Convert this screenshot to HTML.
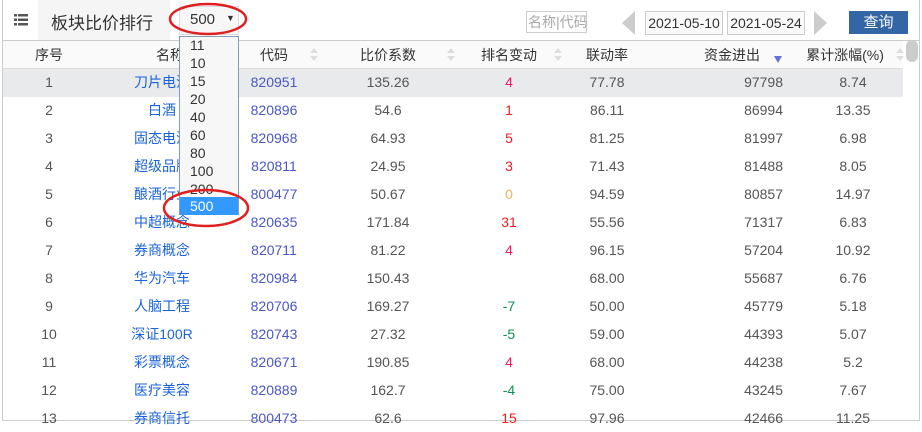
<!DOCTYPE html>
<html><head><meta charset="utf-8"><style>
body{margin:0;width:922px;height:424px;overflow:hidden;background:#fff;font-family:"Liberation Sans","Noto Sans CJK SC",sans-serif;position:relative}
.a{position:absolute;white-space:nowrap}
.cell{position:absolute;font-size:14px;color:#555;text-align:center;line-height:28px}
.bl{color:#1a63d8}
.sort{position:absolute;width:0;height:0;border-left:4px solid transparent;border-right:4px solid transparent}
</style></head><body>
<div class="a" style="left:2px;top:8px;width:916px;height:412px;border:1px solid #ccc;border-top:none"></div>
<div class="a" style="left:2px;top:0;width:916px;height:40px;border-bottom:1px solid #ccc;border-left:1px solid #ccc;border-right:1px solid #ccc"></div>
<div class="a" style="left:38px;top:0;width:132px;height:40px;background:#f5f5f5"></div>
<svg class="a" style="left:14px;top:14px" width="14" height="12"><g fill="#555"><rect x="0" y="0" width="3" height="2.5"/><rect x="4" y="0" width="10" height="2.5"/><rect x="0" y="4.5" width="3" height="2.5"/><rect x="4" y="4.5" width="10" height="2.5"/><rect x="0" y="9" width="3" height="2.5"/><rect x="4" y="9" width="10" height="2.5"/></g></svg>
<div class="a" style="left:51px;top:9px;font-size:17px;color:#333">板块比价排行</div>
<div class="a" style="left:179px;top:6px;width:60px;height:29px;background:#f7f7f7;border:1px solid #ddd;box-sizing:border-box"></div>
<div class="a" style="left:190px;top:11px;font-size:15px;color:#333">500</div>
<div class="a" style="left:226px;top:13px;font-size:9px;color:#333">▼</div>
<div class="a" style="left:526px;top:11px;width:61px;height:22px;border:1px solid #ccc;box-sizing:border-box;font-size:14px;color:#aaa;line-height:20px;padding-left:1px">名称|代码</div>
<svg class="a" style="left:622px;top:11px" width="14" height="24"><polygon points="13,0 13,24 0,12" fill="#ccc"/></svg>
<div class="a" style="left:645px;top:11px;width:78px;height:24px;border:1px solid #ccc;box-sizing:border-box;font-size:14px;color:#333;line-height:22px;text-align:center;background:#fafafa">2021-05-10</div>
<div class="a" style="left:727px;top:11px;width:78px;height:24px;border:1px solid #ccc;box-sizing:border-box;font-size:14px;color:#333;line-height:22px;text-align:center;background:#fafafa">2021-05-24</div>
<svg class="a" style="left:814px;top:11px" width="14" height="24"><polygon points="0,0 0,24 13,12" fill="#ccc"/></svg>
<div class="a" style="left:849px;top:11px;width:59px;height:23px;background:#3465a4;color:#fff;font-size:15px;line-height:23px;text-align:center">查询</div>

<div class="a" style="left:3px;top:41px;width:900px;height:27px;background:#fafafa;border-bottom:1px solid #ddd"></div>
<div class="a" style="left:3px;top:69px;width:900px;height:28px;background:#e9eaec"></div>
<div class="a" style="left:906px;top:40px;width:12px;height:22px;border-radius:6px;background:#ccc"></div>
<div id="hdr"></div>
<div id="rows"></div>

<div class="a" style="left:179px;top:36px;width:60px;height:179px;border:1px solid #7f9db9;box-sizing:border-box;background:#f7f7f7"></div>
<div id="dd"></div>
<svg class="a" style="left:0;top:0" width="922" height="424"><ellipse cx="208" cy="19" rx="38" ry="15" fill="none" stroke="#e02020" stroke-width="2.5"/><ellipse cx="206" cy="208" rx="42" ry="18" fill="none" stroke="#e02020" stroke-width="2.5"/></svg>
<script>
var H=[["序号",49],["名称",170],["代码",274],["比价系数",388],["排名变动",509],["联动率",607],["资金进出",732],["累计涨幅(%)",845]];
var s="";H.forEach(function(h){s+='<div class="cell" style="left:'+(h[1]-60)+'px;width:120px;top:41px;color:#333">'+h[0]+'</div>'});
[310,447,554,896].forEach(function(x){s+='<div class="sort" style="left:'+x+'px;top:48px;border-bottom:5px solid #ddd"></div><div class="sort" style="left:'+x+'px;top:56px;border-top:5px solid #ddd"></div>'});
s+='<div class="sort" style="left:774px;top:56px;border-top:7px solid #6670d8"></div>';
document.getElementById('hdr').innerHTML=s;
var R=[["刀片电池","820951","135.26","4","77.78","97798","8.74"],["白酒","820896","54.6","1","86.11","86994","13.35"],["固态电池","820968","64.93","5","81.25","81997","6.98"],["超级品牌","820811","24.95","3","71.43","81488","8.05"],["酿酒行业","800477","50.67","0","94.59","80857","14.97"],["中超概念","820635","171.84","31","55.56","71317","6.83"],["券商概念","820711","81.22","4","96.15","57204","10.92"],["华为汽车","820984","150.43","","68.00","55687","6.76"],["人脑工程","820706","169.27","-7","50.00","45779","5.18"],["深证100R","820743","27.32","-5","59.00","44393","5.07"],["彩票概念","820671","190.85","4","68.00","44238","5.2"],["医疗美容","820889","162.7","-4","75.00","43245","7.67"],["券商信托","800473","62.6","15","97.96","42466","11.25"]];
var col={"4":"#f0146e","1":"#f02020","5":"#f02020","3":"#f02020","0":"#f6b45a","31":"#f02020","15":"#f02020"};
var o="";R.forEach(function(r,i){var t=68+i*28;
o+='<div class="cell" style="left:19px;width:60px;top:'+t+'px">'+(i+1)+'</div>';
o+='<div class="cell bl" style="left:102px;width:120px;top:'+t+'px">'+r[0]+'</div>';
o+='<div class="cell" style="left:224px;width:100px;top:'+t+'px;color:#4a56c8">'+r[1]+'</div>';
o+='<div class="cell" style="left:338px;width:100px;top:'+t+'px">'+r[2]+'</div>';
var c=r[3][0]=="-"?"#109050":(col[r[3]]||"#f02020");
o+='<div class="cell" style="left:459px;width:100px;top:'+t+'px;color:'+c+'">'+r[3]+'</div>';
o+='<div class="cell" style="left:557px;width:100px;top:'+t+'px">'+r[4]+'</div>';
o+='<div class="cell" style="left:683px;width:100px;top:'+t+'px;text-align:right">'+r[5]+'</div>';
o+='<div class="cell" style="left:803px;width:100px;top:'+t+'px">'+r[6]+'</div>';});
document.getElementById('rows').innerHTML=o;
var D=["11","10","15","20","40","60","80","100","200","500"],d="";
D.forEach(function(v,i){var t=36+i*18;d+='<div class="a" style="left:180px;top:'+t+'px;width:58px;height:18px;font-size:14px;line-height:18px;padding-left:10px;box-sizing:border-box;'+(i==9?'background:#3399ff;color:#fff;top:197px;':'color:#333;')+'">'+v+'</div>'});
document.getElementById('dd').innerHTML=d;
</script>
</body></html>
